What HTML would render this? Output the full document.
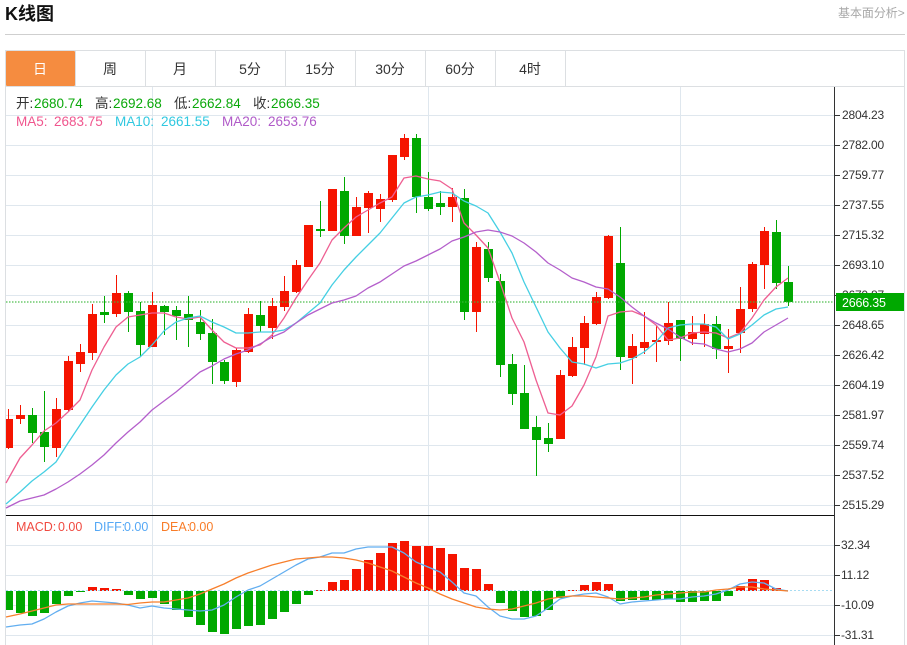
<!DOCTYPE html>
<html lang="zh">
<head>
<meta charset="utf-8">
<title>K线图</title>
<style>
html,body{margin:0;padding:0;background:#fff;width:907px;height:645px;overflow:hidden}
svg{display:block;font-family:"Liberation Sans","Noto Sans CJK SC",sans-serif}
</style>
</head>
<body>
<svg width="907" height="645" viewBox="0 0 907 645" xmlns="http://www.w3.org/2000/svg">
<text x="5" y="20" font-size="18" font-weight="700" fill="#111">K线图</text>
<text x="838" y="17" font-size="12" fill="#a8a8a8" letter-spacing="-.05">基本面分析&gt;</text>
<rect x="5" y="34" width="900" height="1" fill="#cfcfcf"/>

<!-- tabs -->
<path d="M5 50.500H905M5 86.500H905M5.500 50V645M904.500 50V645M75.500 50V86M145.500 50V86M215.500 50V86M285.500 50V86M355.500 50V86M425.500 50V86M495.500 50V86M565.500 50V86" stroke="#dcdfe2" fill="none"/>
<rect x="6" y="51" width="69" height="35" rx="1" fill="#f58c40"/>
<g font-size="14" fill="#333" text-anchor="middle">
<text x="40" y="74" fill="#fff">日</text>
<text x="110" y="74">周</text>
<text x="180" y="74">月</text>
<text x="250" y="74">5分</text>
<text x="320" y="74">15分</text>
<text x="390" y="74">30分</text>
<text x="460" y="74">60分</text>
<text x="530" y="74">4时</text>
</g>

<!-- grid -->
<path d="M6 115.500H834M6 145.500H834M6 175.500H834M6 205.500H834M6 235.500H834M6 265.500H834M6 295.500H834M6 325.500H834M6 355.500H834M6 385.500H834M6 415.500H834M6 445.500H834M6 475.500H834M6 505.500H834M6 545.500H834M6 575.500H834M6 605.500H834M6 635.500H834M152.500 87V645M428.500 87V645M680.500 87V645" stroke="#dfe7ee" fill="none"/>

<!-- header labels -->
<g font-size="13.500">
<text x="16" y="108" fill="#333">开:</text><text x="34" y="108" fill="#0aa80a">2680.74</text>
<text x="95" y="108" fill="#333">高:</text><text x="113" y="108" fill="#0aa80a">2692.68</text>
<text x="174" y="108" fill="#333">低:</text><text x="192" y="108" fill="#0aa80a">2662.84</text>
<text x="253" y="108" fill="#333">收:</text><text x="271" y="108" fill="#0aa80a">2666.35</text>
<text x="16" y="126" fill="#f0568e">MA5:</text><text x="54" y="126" fill="#f0568e">2683.75</text>
<text x="115" y="126" fill="#2fc8e0">MA10:</text><text x="161" y="126" fill="#2fc8e0">2661.55</text>
<text x="222" y="126" fill="#b05ac8">MA20:</text><text x="268" y="126" fill="#b05ac8">2653.76</text>
</g>

<!-- candles -->
<path fill="#f51400" d="M6 419h7v29h-7zM8 409h1v40h-1z
M16 415h9v4h-9zM20 405h1v19h-1z
M52 409h9v39h-9zM56 398h1v59h-1z
M64 361h9v49h-9zM68 356h1v55h-1z
M76 352h9v12h-9zM80 344h1v28h-1z
M88 314h9v39h-9zM92 304h1v56h-1z
M112 293h9v21h-9zM116 275h1v42h-1z
M148 305h9v42h-9zM152 292h1v55h-1z
M232 350h9v32h-9zM236 348h1v39h-1z
M244 314h9v38h-9zM248 308h1v45h-1z
M268 306h9v22h-9zM272 298h1v41h-1z
M280 291h9v16h-9zM284 276h1v35h-1z
M292 265h9v27h-9zM296 260h1v33h-1z
M304 225h9v42h-9z
M328 189h9v42h-9z
M352 207h9v29h-9zM356 197h1v39h-1z
M364 193h9v15h-9zM368 191h1v42h-1z
M376 199h9v10h-9zM380 194h1v28h-1z
M388 155h9v45h-9zM392 155h1v47h-1z
M400 138h9v19h-9zM404 134h1v26h-1z
M448 197h9v10h-9zM452 188h1v34h-1z
M472 247h9v65h-9zM476 242h1v90h-1z
M556 375h9v64h-9zM560 370h1v69h-1z
M568 347h9v29h-9zM572 337h1v40h-1z
M580 323h9v25h-9zM584 316h1v49h-1z
M592 297h9v27h-9zM596 292h1v33h-1z
M604 236h9v62h-9zM608 235h1v64h-1z
M628 346h9v12h-9zM632 334h1v50h-1z
M640 342h9v6h-9zM644 312h1v42h-1z
M652 340h9v2h-9zM656 325h1v37h-1z
M664 323h9v18h-9zM668 302h1v43h-1z
M688 332h9v7h-9zM692 316h1v29h-1z
M700 324h9v10h-9zM704 314h1v33h-1z
M724 346h9v3h-9zM728 329h1v44h-1z
M736 309h9v24h-9zM740 287h1v66h-1z
M748 264h9v45h-9zM752 262h1v50h-1z
M760 231h9v34h-9zM764 227h1v62h-1z"/>
<path fill="#00a800" d="M28 415h9v18h-9zM32 408h1v35h-1z
M40 432h9v15h-9zM44 391h1v71h-1z
M100 312h9v3h-9zM104 296h1v27h-1z
M124 293h9v19h-9zM128 291h1v41h-1z
M136 311h9v34h-9zM140 302h1v55h-1z
M160 306h9v6h-9zM164 305h1v30h-1z
M172 310h9v6h-9zM176 306h1v34h-1z
M184 314h9v6h-9zM188 296h1v51h-1z
M196 322h9v12h-9zM200 310h1v30h-1z
M208 333h9v29h-9zM212 319h1v65h-1z
M220 362h9v19h-9zM224 360h1v24h-1z
M256 315h9v11h-9zM260 301h1v31h-1z
M316 229h9v2h-9zM320 201h1v36h-1z
M340 191h9v45h-9zM344 177h1v67h-1z
M412 138h9v59h-9zM416 134h1v79h-1z
M424 197h9v12h-9zM428 172h1v39h-1z
M436 203h9v4h-9zM440 191h1v24h-1z
M460 198h9v114h-9zM464 189h1v131h-1z
M484 249h9v29h-9zM488 242h1v40h-1z
M496 281h9v84h-9zM500 274h1v103h-1z
M508 364h9v30h-9zM512 354h1v51h-1z
M520 393h9v36h-9zM524 365h1v64h-1z
M532 427h9v13h-9zM536 416h1v60h-1z
M544 438h9v6h-9zM548 423h1v29h-1z
M616 263h9v94h-9zM620 227h1v143h-1z
M676 320h9v19h-9zM680 320h1v41h-1z
M712 324h9v25h-9zM716 316h1v43h-1z
M772 232h9v51h-9zM776 220h1v69h-1z
M784 282h9v20h-9zM788 266h1v40h-1z"/>

<!-- last price dotted -->
<path d="M6 302H834" stroke="#3cb83c" stroke-width="1.500" stroke-dasharray="1.500 1.500" fill="none" opacity=".75"/>

<!-- MA lines -->
<g fill="none" stroke-width="1.300" stroke-linejoin="round">
<polyline stroke="#ee5f92" points="6,483 20,458 32,445 44,431 56,423 68,412 80,400 92,370 104,347 116,327 128,317 140,315 152,313 164,313 176,317 188,319 200,317 212,330 224,342 236,348 248,348 260,345 272,335 284,318 296,298 308,280 320,263 332,240 344,228 356,217 368,210 380,203 392,197 404,178 416,176 428,179 440,181 452,189 464,223 476,235 488,248 500,282 512,318 524,342 536,380 548,413 560,415 572,406 584,385 596,357 608,316 620,312 632,311 644,316 656,325 668,340 680,338 692,333 704,332 716,333 728,338 740,333 752,318 764,300 776,287 788,278"/>
<polyline stroke="#45cfe3" points="6,504 20,492 32,481 44,472 56,462 68,443 80,425 92,407 104,390 116,375 128,364 140,357 152,345 164,331 176,322 188,318 200,316 212,322 224,327 236,333 248,333 260,332 272,332 284,330 296,323 308,313 320,303 332,285 344,270 356,257 368,245 380,233 392,218 404,203 416,197 428,195 440,192 452,193 464,201 476,206 488,213 500,232 512,253 524,282 536,307 548,332 560,348 572,362 584,364 596,368 608,364 620,363 632,359 644,352 656,342 668,328 680,325 692,324 704,324 716,327 728,339 740,334 752,325 764,315 776,309 788,307"/>
<polyline stroke="#b45fcb" points="6,508 20,501 32,498 44,495 56,489 68,482 80,474 92,465 104,455 116,443 128,432 140,422 152,410 164,401 176,392 188,382 200,372 212,366 224,359 236,354 248,350 260,344 272,337 284,332 296,323 308,315 320,309 332,303 344,300 356,296 368,288 380,282 392,274 404,266 416,261 428,255 440,249 452,241 464,237 476,232 488,230 500,232 512,236 524,243 536,252 548,263 560,270 572,278 584,282 596,287 608,289 620,297 632,307 644,316 656,323 668,329 680,337 692,343 704,344 716,349 728,352 740,349 752,343 764,332 776,325 788,318"/>
</g>

<!-- divider & axis -->
<rect x="6" y="515" width="828" height="1" fill="#111"/>
<rect x="834" y="87" width="1" height="558" fill="#333"/>
<path d="M835 115.500h5M835 145.500h5M835 175.500h5M835 205.500h5M835 235.500h5M835 265.500h5M835 295.500h5M835 325.500h5M835 355.500h5M835 385.500h5M835 415.500h5M835 445.500h5M835 475.500h5M835 505.500h5M835 545.500h5M835 575.500h5M835 605.500h5M835 635.500h5" stroke="#333" fill="none"/>
<g font-size="12" fill="#333" letter-spacing="-.2">
<text x="842" y="119">2804.23</text>
<text x="842" y="149">2782.00</text>
<text x="842" y="179">2759.77</text>
<text x="842" y="209">2737.55</text>
<text x="842" y="239">2715.32</text>
<text x="842" y="269">2693.10</text>
<text x="842" y="299">2670.87</text>
<text x="842" y="329">2648.65</text>
<text x="842" y="359">2626.42</text>
<text x="842" y="389">2604.19</text>
<text x="842" y="419">2581.97</text>
<text x="842" y="449">2559.74</text>
<text x="842" y="479">2537.52</text>
<text x="842" y="509">2515.29</text>
<text x="841" y="549">32.34</text>
<text x="841" y="579">11.12</text>
<text x="841" y="609">-10.09</text>
<text x="841" y="639">-31.31</text>
</g>
<rect x="836" y="293" width="68" height="18" fill="#00a800"/>
<text x="842" y="307" font-size="12.500" fill="#fff" letter-spacing="-.2">2666.35</text>

<!-- MACD labels -->
<g font-size="12.500">
<text x="16" y="531" fill="#f04a40">MACD:</text><text x="58" y="531" fill="#f04a40">0.00</text>
<text x="94" y="531" fill="#55a8f5">DIFF:</text><text x="124" y="531" fill="#55a8f5">0.00</text>
<text x="161" y="531" fill="#f87c28">DEA:</text><text x="189" y="531" fill="#f87c28">0.00</text>
</g>

<!-- MACD bars -->
<path fill="#00a800" d="M6 591h7v19h-7zM16 591h9v22h-9zM28 591h9v25h-9zM40 591h9v22h-9zM52 591h9v13h-9zM64 591h9v5h-9zM76 591h9v1h-9zM124 591h9v4h-9zM136 591h9v8h-9zM148 591h9v7h-9zM160 591h9v13h-9zM172 591h9v19h-9zM184 591h9v26h-9zM196 591h9v34h-9zM208 591h9v41h-9zM220 591h9v43h-9zM232 591h9v38h-9zM244 591h9v35h-9zM256 591h9v34h-9zM268 591h9v28h-9zM280 591h9v21h-9zM292 591h9v13h-9zM304 591h9v4h-9zM496 591h9v12h-9zM508 591h9v20h-9zM520 591h9v26h-9zM532 591h9v25h-9zM544 591h9v19h-9zM556 591h9v7h-9zM616 591h9v10h-9zM628 591h9v9h-9zM640 591h9v9h-9zM652 591h9v9h-9zM664 591h9v8h-9zM676 591h9v11h-9zM688 591h9v11h-9zM700 591h9v10h-9zM712 591h9v10h-9zM724 591h9v5h-9z"/>
<path fill="#f51400" d="M88 587h9v4h-9zM100 588h9v3h-9zM112 589h9v2h-9zM316 590h9v1h-9zM328 582h9v9h-9zM340 580h9v11h-9zM352 569h9v22h-9zM364 560h9v31h-9zM376 553h9v38h-9zM388 543h9v48h-9zM400 541h9v50h-9zM412 546h9v45h-9zM424 546h9v45h-9zM436 548h9v43h-9zM448 554h9v37h-9zM460 568h9v23h-9zM472 569h9v22h-9zM484 584h9v7h-9zM568 590h9v1h-9zM580 585h9v6h-9zM592 582h9v9h-9zM604 584h9v7h-9zM736 586h9v5h-9zM748 579h9v12h-9zM760 580h9v11h-9zM772 588h9v3h-9z"/>
<path d="M6 590.500H834" stroke="#a8dcf2" stroke-dasharray="2 2" fill="none"/>
<g fill="none" stroke-width="1.300" stroke-linejoin="round">
<polyline stroke="#62aef0" points="6,627 20,625 32,624 44,619 56,612 68,606 80,603 92,601 104,602 116,603 128,605 140,608 152,606 164,608 176,609 188,610 200,611 212,610 224,605 236,597 248,590 260,586 272,579 284,572 296,565 308,559 320,557 332,553 344,553 356,549 368,547 380,547 392,547 404,553 416,562 428,567 440,572 452,582 464,593 476,596 488,607 500,616 512,619 524,619 536,616 548,608 560,599 572,596 584,594 596,593 608,597 620,604 632,602 644,601 656,600 668,599 680,599 692,597 704,596 716,594 728,590 740,584 752,582 764,583 776,589 788,591"/>
<polyline stroke="#f77f2c" points="6,617 20,614 32,611 44,608 56,605 68,604 80,604 92,604 104,604 116,604 128,604.500 140,603 152,602 164,602 176,600 188,598 200,594 212,589 224,584 236,578 248,573 260,569 272,565 284,562 296,559 308,558 320,557 332,557 344,558 356,560 368,563 380,567 392,571 404,577 416,583 428,588 440,594 452,599 464,603 476,607 488,609 500,610 512,609 524,606 536,603 548,599 560,597 572,596 584,596 596,597 608,598 620,599 632,598 644,597 656,595 668,594 680,593 692,592 704,592 716,590 728,589 740,587 752,587 764,589 776,590 788,591"/>
</g>
</svg>
</body>
</html>
